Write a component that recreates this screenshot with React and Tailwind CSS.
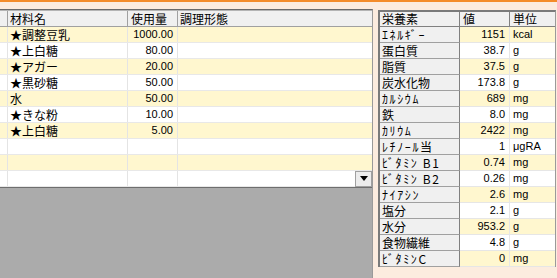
import React from "react";

const ingredients = [
  ["★調整豆乳", "1000.00"],
  ["★上白糖", "80.00"],
  ["★アガー", "20.00"],
  ["★黒砂糖", "50.00"],
  ["水", "50.00"],
  ["★きな粉", "10.00"],
  ["★上白糖", "5.00"],
  ["", ""],
  ["", ""],
  ["", ""],
];

const nutrients = [
  ["ｴﾈﾙｷﾞｰ", "1151", "kcal"],
  ["蛋白質", "38.7", "g"],
  ["脂質", "37.5", "g"],
  ["炭水化物", "173.8", "g"],
  ["ｶﾙｼｳﾑ", "689", "mg"],
  ["鉄", "8.0", "mg"],
  ["ｶﾘｳﾑ", "2422", "mg"],
  ["ﾚﾁﾉｰﾙ当", "1", "μgRA"],
  ["ﾋﾞﾀﾐﾝ B1", "0.74", "mg"],
  ["ﾋﾞﾀﾐﾝ B2", "0.26", "mg"],
  ["ﾅｲｱｼﾝ", "2.6", "mg"],
  ["塩分", "2.1", "g"],
  ["水分", "953.2", "g"],
  ["食物繊維", "4.8", "g"],
  ["ﾋﾞﾀﾐﾝC", "0", "mg"],
];

const jp = "font-['Noto_Sans_CJK_JP',sans-serif]";
const num = "font-['Liberation_Sans',sans-serif] text-[11px]";

function Label({ text }) {
  const half = /[\uFF61-\uFF9F]/.test(text);
  return (
    <span className={half ? "whitespace-pre tracking-[1.6px]" : "whitespace-pre"}>
      {text}
    </span>
  );
}

export default function App() {
  return (
    <div className={`w-[557px] h-[278px] bg-[#fcecdf] border-t-2 border-[#f48c2a] flex items-start overflow-hidden text-[12px] text-black leading-none ${jp}`}>
      {/* Left ingredient grid */}
      <div className="mt-[7px] w-[373px] h-[269px] flex flex-col border-t border-[#6a6a6a] border-r border-r-[#9a9a9a] bg-white">
        <div className="flex h-[17px] bg-[#f0f0f0] border-t border-t-[#b4b4b4] border-b border-[#a0a0a0]">
          <div className="w-[8px] border-r border-[#a0a0a0]" />
          <div className="w-[120px] border-r border-[#a0a0a0] flex items-center pl-[2px]">材料名</div>
          <div className="w-[50px] border-r border-[#a0a0a0] flex items-center pl-[3px]">使用量</div>
          <div className="flex-1 flex items-center pl-[2px]">調理形態</div>
        </div>
        {ingredients.map(([name, amt], i) => (
          <div
            key={i}
            className={`flex h-[16px] border-b border-[#e8e8e8] ${i % 2 === 0 ? "bg-[#fff7cf]" : "bg-white"}`}
          >
            <div className="w-[8px] border-r border-[#e4e4e4]" />
            <div className="w-[120px] border-r border-[#e4e4e4] flex items-center pl-[2px]">{name}</div>
            <div className={`w-[50px] border-r border-[#e4e4e4] flex items-center justify-end pr-[4px] ${num}`}>{amt}</div>
            <div className="flex-1 flex items-center justify-end">
              {i === ingredients.length - 1 && (
                <div className="w-[17px] h-[16px] bg-[#ececec] border border-[#a0a0a0] flex items-center justify-center">
                  <svg width="8" height="5" viewBox="0 0 8 5">
                    <path d="M0 0H8L4 5Z" fill="#000" />
                  </svg>
                </div>
              )}
            </div>
          </div>
        ))}
        <div className="flex-1 bg-[#ababab] border-t border-[#6e6e6e]" />
      </div>

      {/* Right nutrient table */}
      <div className="mt-[8px] ml-[5px] w-[178px] border-t-2 border-l-2 border-[#7a7a7a] border-r border-r-[#9a9a9a] bg-white">
        <div className="flex h-[15px] bg-[#f0f0f0] border-b border-[#808080]">
          <div className="w-[80px] border-r border-[#808080] flex items-center pl-[2px]">栄養素</div>
          <div className="w-[50px] border-r border-[#808080] flex items-center pl-[3px]">値</div>
          <div className="flex-1 flex items-center pl-[3px]">単位</div>
        </div>
        {nutrients.map(([label, val, unit], i) => {
          const bg = i % 2 === 0 ? "bg-[#fff7cf]" : "bg-white";
          return (
            <div key={i} className="flex h-[16px]">
              <div className="w-[80px] bg-[#f0f0f0] border-r border-b border-r-[#808080] border-b-[#a0a0a0] flex items-center pl-[2px]">
                <Label text={label} />
              </div>
              <div className={`w-[50px] ${bg} border-r border-b border-[#e6e6e6] flex items-center justify-end pr-[4px] ${num}`}>
                {val}
              </div>
              <div className={`flex-1 ${bg} border-b border-[#e6e6e6] flex items-center pl-[3px] ${num}`}>
                {unit}
              </div>
            </div>
          );
        })}
      </div>
    </div>
  );
}
